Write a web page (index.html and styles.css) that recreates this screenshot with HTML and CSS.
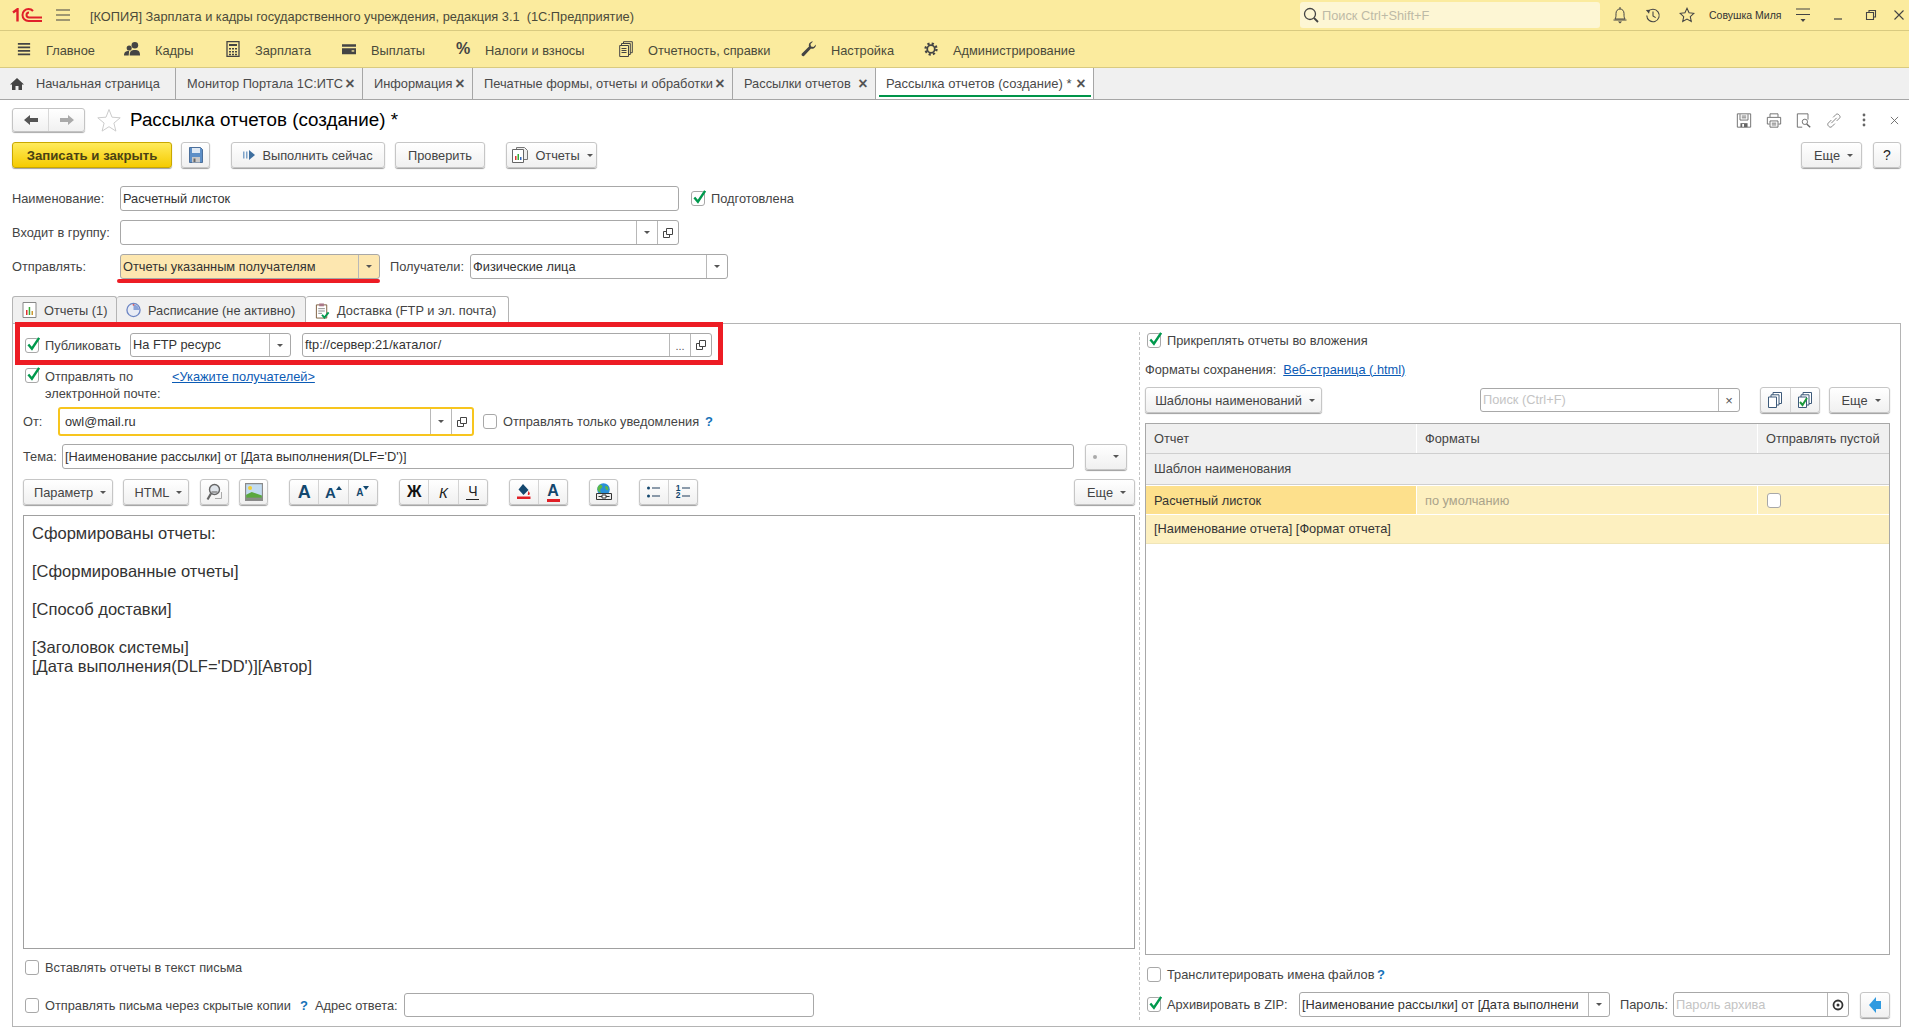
FILE: index.html
```html
<!DOCTYPE html>
<html lang="ru">
<head>
<meta charset="utf-8">
<title>Рассылка отчетов (создание)</title>
<link rel="stylesheet" href="styles.css">
</head>
<body>
<svg class="defs" aria-hidden="true">
  <symbol id="check" viewBox="0 0 16 16"><path d="M2.5 8.5 6.3 13 14 1.5" fill="none" stroke="#00994d" stroke-width="2.6"/></symbol>
  <symbol id="open" viewBox="0 0 12 12"><path d="M4.5 1.5h6v6h-6zM4.5 4.5h-3v6h6v-3" fill="none" stroke="#444" stroke-width="1"/></symbol>
</svg>

<header class="titlebar">
  <svg class="logo" viewBox="0 0 30 14"><path d="M1 4.500 5.500 1.200v12.300" fill="none" stroke="#e0202a" stroke-width="2.400"/><path d="M21 3C20 1.800 18.500 1 16.500 1a6 6 0 0 0 0 12H30M17 4.500a2.500 2.500 0 0 0 0 5h13" fill="none" stroke="#e0202a" stroke-width="2"/></svg>
  <svg class="burger" viewBox="0 0 14 12"><path d="M0 1h14M0 6h14M0 11h14" stroke="#444" stroke-width="1.200"/></svg>
  <span class="apptitle">[КОПИЯ] Зарплата и кадры государственного учреждения, редакция 3.1&nbsp; (1С:Предприятие)</span>
  <div class="search">
    <svg class="search-ic" viewBox="0 0 16 16"><circle cx="7" cy="7" r="5.500" fill="none" stroke="#444" stroke-width="1.300"/><path d="m11 11 4 4" stroke="#444" stroke-width="1.800"/></svg>
    <span class="search-ph">Поиск Ctrl+Shift+F</span>
  </div>
  <svg class="top-ic top-bell" viewBox="0 0 16 18"><path d="M3 13c1-1.500 1-3 1-5.500C4 5 5.500 3 8 3s4 2 4 4.500c0 2.500 0 4 1 5.500zM8 1v2M1.500 14h13" fill="none" stroke="#444"/><path d="M6 15.500h4L8 17.500z" fill="#444"/></svg>
  <svg class="top-ic top-hist" viewBox="0 0 18 18"><path d="M3.300 5.500A7 7 0 1 1 2 9.500" fill="none" stroke="#444" stroke-width="1.200"/><path d="M1 3.500 5.500 3 4.500 7.500z" fill="#444"/><path d="M9 5v5l3 2" fill="none" stroke="#444" stroke-width="1.200"/></svg>
  <svg class="top-ic top-star" viewBox="0 0 18 18"><path d="m9 1.500 2.300 5 5.400.6-4 3.700 1.100 5.400L9 13.500l-4.800 2.700 1.100-5.400-4-3.700 5.400-.6z" fill="none" stroke="#444" stroke-width="1.200"/></svg>
  <span class="username">Совушка Миля</span>
  <svg class="top-ic top-lines" viewBox="0 0 16 16"><path d="M1 2h14M1 7.500h14" stroke="#444" stroke-width="1.200"/><path d="M5.500 12h5L8 15z" fill="#444"/></svg>
  <svg class="win-ic win-min" viewBox="0 0 12 12"><path d="M2 10h8" stroke="#444" stroke-width="1.200"/></svg>
  <svg class="win-ic win-res" viewBox="0 0 12 12"><path d="M4 3V1.500h6.500V8H8.500M1.500 3.500h7v7h-7z" fill="none" stroke="#444" stroke-width="1.100"/></svg>
  <svg class="win-ic win-close" viewBox="0 0 12 12"><path d="m1.500 1.500 9 9M10.500 1.500l-9 9" stroke="#444" stroke-width="1.100"/></svg>
</header>

<nav class="menubar">
  <a class="menu-item mi-main"><svg class="menu-ic" viewBox="0 0 16 16"><path d="M1 2h14M1 6h14M1 10h14M1 14h14" stroke="#444" stroke-width="2"/></svg><span>Главное</span></a>
  <a class="menu-item mi-staff"><svg class="menu-ic ic-wide" viewBox="0 0 18 16"><circle cx="11.500" cy="4" r="3.500" fill="#444"/><path d="M6 15c0-5 2-6 5.500-6s5.500 1 5.500 6z" fill="#444"/><circle cx="5.500" cy="7" r="2.700" fill="#444"/><path d="M0 15c0-4 2-5 5-5 1 0 0 2 0 5z" fill="#444"/></svg><span>Кадры</span></a>
  <a class="menu-item mi-pay"><svg class="menu-ic" viewBox="0 0 14 16"><path d="M1 .5h12v15H1z" fill="none" stroke="#444" stroke-width="1.300"/><path d="M3 3h8v2H3z" fill="#444"/><path d="M3 7h2v1.500H3zM6 7h2v1.500H6zM9 7h2v1.500H9zM3 10h2v1.500H3zM6 10h2v1.500H6zM9 10h2v1.500H9zM3 12.800h2v1.500H3zM6 12.800h2v1.500H6zM9 12.800h2v1.500H9z" fill="#444"/></svg><span>Зарплата</span></a>
  <a class="menu-item mi-out"><svg class="menu-ic" viewBox="0 0 16 14"><path d="M0 1.500h16v3H0zM0 6h16v7H0z" fill="#444"/><path d="M11 8.500h3V10h-3z" fill="#fbeb9e"/></svg><span>Выплаты</span></a>
  <a class="menu-item mi-tax"><span class="pct">%</span><span>Налоги и взносы</span></a>
  <a class="menu-item mi-rep"><svg class="menu-ic" viewBox="0 0 14 16"><path d="M4.500 2.500V.7h8.800v11h-2M2.500 4.500V2.500h8.800v11H9.500M.7 4.500h8.800v11H.7zM2.500 7.500h5M2.500 9.500h5M2.500 11.500h5" fill="none" stroke="#444"/></svg><span>Отчетность, справки</span></a>
  <a class="menu-item mi-set"><svg class="menu-ic ic-wide" viewBox="0 0 16 16"><path d="M15.500 3.500c0 3-2.500 4.800-5 4L3.500 15c-1 1-3.200-1-2.300-2.300L8.500 5.500c-.8-2.500 1-5 4-5L10 3l.5 2.500L13 6z" fill="#444"/></svg><span>Настройка</span></a>
  <a class="menu-item mi-adm"><svg class="menu-ic" viewBox="0 0 16 16"><circle cx="8" cy="8" r="4.300" fill="none" stroke="#444" stroke-width="2"/><circle cx="8" cy="8" r="6.300" fill="none" stroke="#444" stroke-width="2.600" stroke-dasharray="2.500 2.450"/></svg><span>Администрирование</span></a>
</nav>

<div class="tabsbar">
  <div class="tab tab-home"><svg class="home-ic" viewBox="0 0 14 12"><path d="M7 0 0 6.500h2V12h3.500V8h3v4H12V6.500h2z" fill="#444"/></svg><span>Начальная страница</span></div>
  <div class="tab tab-its"><span>Монитор Портала 1С:ИТС</span><span class="tab-x">×</span></div>
  <div class="tab tab-info"><span>Информация</span><span class="tab-x">×</span></div>
  <div class="tab tab-print"><span>Печатные формы, отчеты и обработки</span><span class="tab-x">×</span></div>
  <div class="tab tab-list"><span>Рассылки отчетов</span><span class="tab-x">×</span></div>
  <div class="tab tab-active"><span>Рассылка отчетов (создание) *</span><span class="tab-x">×</span></div>
</div>

<main class="page">
  <div class="head">
    <div class="nav">
      <span class="nav-cell"><svg class="nav-ic" viewBox="0 0 14 10"><path d="M0 5 6 0v3h8v4H6v3z" fill="#555"/></svg></span>
      <span class="nav-cell"><svg class="nav-ic" viewBox="0 0 14 10"><path d="M14 5 8 0v3H0v4h8v3z" fill="#aaa"/></svg></span>
    </div>
    <svg class="fav" viewBox="0 0 24 24"><path d="m12 1.500 3 7.700 8.200.6-6.300 5.300 2 8-6.900-4.400-6.900 4.400 2-8L.8 9.800 9 9.200z" fill="none" stroke="#ccc"/></svg>
    <h1 class="doc-title">Рассылка отчетов (создание) *</h1>
    <div class="head-tools">
      <svg class="hd-ic" viewBox="0 0 18 18"><path d="M1.500 1.500h15v15h-15z" fill="none" stroke="#666"/><path d="M4.500 2v6.500h9V2M6.500 4h5M6.500 6h5" fill="none" stroke="#666"/><path d="M5 12h8v4.500H5z" fill="#666"/><path d="M7 13h2v3H7z" fill="#fff"/></svg>
      <svg class="hd-ic" viewBox="0 0 18 18"><path d="M4.500 5V1.500h9V5M4 13H1.500V5.500h15V13H14M4.500 9.500h9v7h-9zM6.500 12h5M6.500 14h5" fill="none" stroke="#666"/></svg>
      <svg class="hd-ic" viewBox="0 0 18 18"><path d="M7 16.500H1.500v-15h12V8" fill="none" stroke="#666"/><circle cx="10" cy="10.500" r="3" fill="none" stroke="#666"/><path d="m12 13 4 3.500" stroke="#666" stroke-width="1.600"/></svg>
      <svg class="hd-ic" viewBox="0 0 18 18"><path d="M8 5.500 11.500 2c1.500-1.500 5.500 2 4 4L12 9.500M10 12.500 6.500 16c-2 2-6-2-4-4L6 8.500M6 12l6-6" fill="none" stroke="#777"/></svg>
      <svg class="hd-ic hd-dots" viewBox="0 0 4 14"><circle cx="2" cy="2" r="1.400" fill="#666"/><circle cx="2" cy="7" r="1.400" fill="#666"/><circle cx="2" cy="12" r="1.400" fill="#666"/></svg>
      <svg class="hd-ic hd-x" viewBox="0 0 10 10"><path d="m1 1 8 8M9 1 1 9" stroke="#666"/></svg>
    </div>
  </div>

  <div class="actions">
    <button class="btn btn-primary">Записать и закрыть</button>
    <button class="btn btn-save"><svg class="ic16" viewBox="0 0 14 16"><path d="M.5.500h11l2 2v13H.5z" fill="#5d8fc7" stroke="#4b6f9b"/><path d="M3 1h8v5H3z" fill="#dfe9f4"/><path d="M3 10h8v5.500H3z" fill="#c9c9c9"/><path d="M4.500 11.500h2V15h-2z" fill="#666"/></svg></button>
    <button class="btn btn-run"><svg class="ic-run" viewBox="0 0 12 12"><path d="M0 2.500h1.500v7H0zM3 2.500h1.500v7H3z" fill="#7fa3c9"/><path d="M6 1v10l6-5z" fill="#3f6f9f"/></svg>Выполнить сейчас</button>
    <button class="btn btn-check">Проверить</button>
    <button class="btn btn-reports"><svg class="ic16" viewBox="0 0 16 16"><path d="M4.500.5h8l3 3v9h-11z" fill="#eee" stroke="#777"/><path d="M.5 2.500h11v13H.500z" fill="#fff" stroke="#666"/><path d="M3 9h1.500v4H3z" fill="#d33"/><path d="M5.500 7h1.500v6H5.500z" fill="#3a3"/><path d="M8 10h1.500v3H8z" fill="#36b"/></svg>Отчеты<i class="caret"></i></button>
    <div class="actions-right">
      <button class="btn btn-more">Еще<i class="caret"></i></button>
      <button class="btn btn-help">?</button>
    </div>
  </div>

  <div class="frow frow-first">
    <label class="flabel">Наименование:</label>
    <div class="fld w-name"><span class="fld-text">Расчетный листок</span></div>
    <span class="cb cb-on cb-ready"><svg viewBox="0 0 16 16"><use href="#check"/></svg></span>
    <span class="txt">Подготовлена</span>
  </div>
  <div class="frow">
    <label class="flabel">Входит в группу:</label>
    <div class="fld w-name"><span class="fld-text"></span><span class="fbtn"><i class="caret"></i></span><span class="fbtn"><svg class="open-ic" viewBox="0 0 12 12"><use href="#open"/></svg></span></div>
  </div>
  <div class="frow">
    <label class="flabel">Отправлять:</label>
    <div class="fld fld-warn w-send"><span class="fld-text">Отчеты указанным получателям</span><span class="fbtn"><i class="caret"></i></span><span class="underline"></span></div>
    <label class="txt lbl-recv">Получатели:</label>
    <div class="fld w-recv"><span class="fld-text">Физические лица</span><span class="fbtn"><i class="caret"></i></span></div>
  </div>

  <div class="form-tabs">
    <div class="ftab ftab-1"><svg class="ic16" viewBox="0 0 14 16"><path d="M.5.500h13v15H.5z" fill="#fff" stroke="#888"/><path d="M3.500 8H5v5H3.500z" fill="#d33"/><path d="M6.200 5h1.500v8H6.200z" fill="#3a3"/><path d="M9 9h1.500v4H9z" fill="#c93"/></svg><span>Отчеты (1)</span></div>
    <div class="ftab ftab-2"><svg class="ic16" viewBox="0 0 16 16"><circle cx="8" cy="8" r="7" fill="#e8ecf5" stroke="#6d86c4" stroke-width="1.400"/><path d="M8 8V2a6 6 0 0 1 6 6z" fill="#8aa2d8"/><circle cx="8" cy="2.500" r="1" fill="#d55"/></svg><span>Расписание (не активно)</span></div>
    <div class="ftab ftab-3 ftab-on"><svg class="ic16" viewBox="0 0 14 17"><path d="M.5 2h11v14H.5z" fill="#fff" stroke="#7a5a3a"/><path d="M3.500.5h5v3h-5z" fill="#a78"/><path d="M2.500 6h7M2.500 8.500h7M2.500 11h4" stroke="#888"/><path d="m6.500 12.500 2.500 3 4.500-5.500" fill="none" stroke="#00994d" stroke-width="2"/></svg><span>Доставка (FTP и эл. почта)</span></div>
  </div>

  <section class="panel">
    <span class="redbox"></span>
    <div class="col-left">
      <div class="lrow lrow-pub">
        <span class="cb cb-on cb-ind"><svg viewBox="0 0 16 16"><use href="#check"/></svg></span>
        <span class="txt lbl-pub">Публиковать</span>
        <div class="fld w-ftpsel"><span class="fld-text">На FTP ресурс</span><span class="fbtn"><i class="caret"></i></span></div>
        <div class="fld w-ftp"><span class="fld-text">ftp://сервер:21/каталог/</span><span class="fbtn fbtn-dots">...</span><span class="fbtn"><svg class="open-ic" viewBox="0 0 12 12"><use href="#open"/></svg></span></div>
      </div>
      <div class="lrow lrow-mail">
        <span class="cb cb-on cb-ind"><svg viewBox="0 0 16 16"><use href="#check"/></svg></span>
        <span class="txt lbl-mail">Отправлять по<br>электронной почте:</span>
        <a class="link">&lt;Укажите получателей&gt;</a>
      </div>
      <div class="lrow lrow-from">
        <label class="txt lbl-from">От:</label>
        <div class="fld fld-focus w-from"><span class="fld-text fld-text-from">owl@mail.ru</span><span class="fbtn"><i class="caret"></i></span><span class="fbtn"><svg class="open-ic" viewBox="0 0 12 12"><use href="#open"/></svg></span></div>
        <span class="cb cb-notify"></span>
        <span class="txt lbl-notify">Отправлять только уведомления</span>
        <span class="hint">?</span>
      </div>
      <div class="lrow lrow-subj">
        <label class="txt lbl-subj">Тема:</label>
        <div class="fld w-subj"><span class="fld-text">[Наименование рассылки] от [Дата выполнения(DLF='D')]</span></div>
        <button class="btn btn-dot"><i class="dot"></i><i class="caret"></i></button>
      </div>
      <div class="toolbar">
        <button class="btn tb-param">Параметр<i class="caret"></i></button>
        <button class="btn tb-html">HTML<i class="caret"></i></button>
        <button class="btn tb-ic tb-find"><svg class="ic18" viewBox="0 0 18 18"><path d="M9 15.500h6.500V9" fill="none" stroke="#aaa"/><circle cx="8.500" cy="6.500" r="5" fill="#dfe4ea" stroke="#666" stroke-width="1.400"/><path d="M5.500 9h6" stroke="#888" stroke-width="1.500"/><path d="m5 10.500-3.500 6" stroke="#666" stroke-width="2.200"/></svg></button>
        <button class="btn tb-ic tb-img"><svg class="ic18" viewBox="0 0 16 16"><path d="M.5.500h15v15H.5z" fill="#c3dcf0" stroke="#8a8a8a"/><path d="M1 10.500 6 8l9 3v4H1z" fill="#5aa83f"/><path d="M1 13h14v2H1z" fill="#8a8a8a"/><circle cx="4.500" cy="4.500" r="1.800" fill="#f2cf33"/></svg></button>
        <div class="btn-group g-font">
          <span class="gcell gtext g-a1">A</span>
          <span class="gcell gtext g-a2">A<svg class="tri" viewBox="0 0 6 4"><path d="M3 0 6 4H0z" fill="#13476e"/></svg></span>
          <span class="gcell gtext g-a3">A<svg class="tri" viewBox="0 0 6 4"><path d="M3 4 6 0H0z" fill="#13476e"/></svg></span>
        </div>
        <div class="btn-group g-style">
          <span class="gcell g-b">Ж</span>
          <span class="gcell g-i">К</span>
          <span class="gcell g-u"><span>Ч</span><i class="bar bar-dark"></i></span>
        </div>
        <div class="btn-group g-color">
          <span class="gcell"><svg class="ic18" viewBox="0 0 16 18"><path d="M7 1 2.500 6.500 7.500 12 12.500 7z" fill="#13476e"/><path d="M12.500 8c1 1.500 1.800 2.500 1 3.500s-2 .5-1.700-.8z" fill="#d22"/><path d="M1 13.500h13.500v2.500H1z" fill="#e01f26"/></svg></span>
          <span class="gcell g-acol"><span>A</span><i class="bar bar-red"></i></span>
        </div>
        <button class="btn tb-ic tb-web"><svg class="ic18" viewBox="0 0 18 18"><circle cx="8.500" cy="6.500" r="6.300" fill="#2a8fd8"/><path d="M5 1.500c3 .5 3 3 1 4-1.500 1-1 3 .5 5l-3-2C1.500 6 2.500 3 5 1.500zM10.500 3c3 0 3.500 2.500 2 4.500-1.500-1-3-2-2-4.500z" fill="#5bb947"/><path d="M1.500 10.500h15v6h-15z" fill="#eee" stroke="#333"/><path d="M3.500 13.500h11" stroke="#333"/><path d="M7 12h4v3H7z" fill="#fff" stroke="#333"/></svg></button>
        <div class="btn-group g-list">
          <span class="gcell"><svg class="ic14" viewBox="0 0 14 12"><path d="M5 2h8M5 10h8" stroke="#1f3d5c" stroke-width="1.200"/><circle cx="1.500" cy="2" r="1.500" fill="#13476e"/><circle cx="1.500" cy="10" r="1.500" fill="#13476e"/></svg></span>
          <span class="gcell"><span class="numlist">1<br>2</span><svg class="num-lines" viewBox="0 0 8 12"><path d="M0 2h8M0 10h8" stroke="#1f3d5c" stroke-width="1.200"/></svg></span>
        </div>
        <button class="btn tb-more">Еще<i class="caret"></i></button>
      </div>
      <div class="editor">
        <p>Сформированы отчеты:</p>
        <p>[Сформированные отчеты]</p>
        <p>[Способ доставки]</p>
        <p>[Заголовок системы]<br>[Дата выполнения(DLF='DD')][Автор]</p>
      </div>
      <div class="lrow lrow-ins">
        <span class="cb cb-ind"></span>
        <span class="txt lbl-pub">Вставлять отчеты в текст письма</span>
      </div>
      <div class="lrow lrow-bcc">
        <span class="cb cb-ind"></span>
        <span class="txt lbl-pub lbl-bcc">Отправлять письма через скрытые копии</span>
        <span class="hint">?</span>
        <label class="txt lbl-reply">Адрес ответа:</label>
        <div class="fld w-reply"><span class="fld-text"></span></div>
      </div>
    </div>

    <div class="col-right">
      <div class="rrow rrow-att">
        <span class="cb cb-on cb-ind"><svg viewBox="0 0 16 16"><use href="#check"/></svg></span>
        <span class="txt lbl-pub">Прикреплять отчеты во вложения</span>
      </div>
      <div class="rrow rrow-fmt">
        <span class="txt">Форматы сохранения:</span>
        <a class="link link-fmt">Веб-страница (.html)</a>
      </div>
      <div class="rrow rrow-tools">
        <button class="btn r-tpl">Шаблоны наименований<i class="caret"></i></button>
        <div class="fld w-find"><span class="fld-text fld-ph">Поиск (Ctrl+F)</span><span class="fbtn fbtn-x">×</span></div>
        <div class="btn-group g-copy">
          <span class="gcell"><svg class="ic16" viewBox="0 0 14 16"><path d="M5 3V.5h8.500v11H11M3 5V2.800h8V13H8.500M.5 5h8v10.500h-8z" fill="#fff" stroke="#3d5a7a"/></svg></span>
          <span class="gcell"><svg class="ic16" viewBox="0 0 14 16"><path d="M5 3V.5h8.500v11H11M3 5V2.800h8V13H8.500M.5 5h8v10.500h-8z" fill="#fff" stroke="#3d5a7a"/><path d="m2 10 2.500 3L9 6" fill="none" stroke="#1d9a3d" stroke-width="2"/></svg></span>
        </div>
        <button class="btn r-more">Еще<i class="caret"></i></button>
      </div>
      <div class="grid">
        <div class="grid-head">
          <span class="gh">Отчет</span><span class="gh">Форматы</span><span class="gh gh-last">Отправлять пустой</span>
        </div>
        <div class="grid-sub">Шаблон наименования</div>
        <div class="grid-row">
          <span class="gc gc-cur">Расчетный листок</span><span class="gc gc-dim">по умолчанию</span><span class="gc gc-cb"><span class="cb"></span></span>
        </div>
        <div class="grid-sub2">[Наименование отчета] [Формат отчета]</div>
      </div>
      <div class="rrow rrow-trans">
        <span class="cb cb-ind"></span>
        <span class="txt lbl-pub lbl-trans">Транслитерировать имена файлов</span>
        <span class="hint">?</span>
      </div>
      <div class="rrow rrow-zip">
        <span class="cb cb-on cb-ind"><svg viewBox="0 0 16 16"><use href="#check"/></svg></span>
        <span class="txt lbl-zip">Архивировать в ZIP:</span>
        <div class="fld w-zip"><span class="fld-text fld-clip">[Наименование рассылки] от [Дата выполнени</span><span class="fbtn"><i class="caret"></i></span></div>
        <label class="txt lbl-pass">Пароль:</label>
        <div class="fld w-pass"><span class="fld-text fld-ph">Пароль архива</span><span class="fbtn"><svg class="eye-ic" viewBox="0 0 12 12"><circle cx="6" cy="6" r="4.500" fill="none" stroke="#333" stroke-width="1.800"/><circle cx="6" cy="6" r="1.500" fill="#333"/></svg></span></div>
        <button class="btn btn-arrow"><svg class="ic16" viewBox="0 0 12 16"><path d="M0 8 7 0v4h5v8H7v4z" fill="#2f9ae0"/></svg></button>
      </div>
    </div>
  </section>
</main>
</body>
</html>
```

FILE: styles.css
```css
* { box-sizing: border-box; }
html, body { margin: 0; height: 100%; }
body {
  width: 1909px;
  height: 1036px;
  overflow: hidden;
  background: #fff;
  font-family: "Liberation Sans", Arial, sans-serif;
  font-size: 12.8px;
  color: #444;
}
.defs { width: 0; height: 0; position: absolute; }
svg { display: block; flex: none; }

/* Title bar */
.titlebar {
  height: 31px;
  display: flex;
  align-items: center;
  background: #fbeb9e;
  border-bottom: 1px solid #d9ca80;
}
.logo { width: 30px; height: 14px; margin-left: 12px; }
.burger { width: 14px; height: 12px; margin-left: 14px; }
.apptitle { margin: 2px 0 0 20px; width: 1210px; white-space: nowrap; color: #4a4a3a; }
.search {
  width: 300px; height: 26px;
  display: flex; align-items: center;
  background: #fdf6d4; border-radius: 3px;
  padding-left: 3px;
}
.search-ic { width: 16px; height: 16px; }
.search-ph { margin: 1px 0 0 3px; color: #bdbaa6; }
.top-ic { width: 16px; height: 18px; }
.top-bell { margin-left: 12px; }
.top-hist { margin-left: 17px; }
.top-star { margin-left: 18px; }
.username { margin-left: 14px; width: 86px; white-space: nowrap; font-size: 10.5px; color: #333; }
.win-ic { width: 12px; height: 12px; }
.win-min { margin-left: 21px; }
.win-res { margin-left: 21px; }
.win-close { margin-left: 16px; }

/* Menu */
.menubar {
  height: 37px;
  display: flex;
  align-items: center;
  background: #fbeb9e;
  border-bottom: 1px solid #d9ca80;
  padding-left: 17px;
}
.menu-item { display: flex; align-items: center; color: #4a4a3a; white-space: nowrap; }
.menu-item > span:last-child { margin-top: 2px; }
.menu-ic { width: 14px; height: 16px; margin-right: 15px; }
.ic-wide { width: 17px; margin-right: 14px; }
.pct { width: 14px; margin-right: 15px; font-size: 16px; font-weight: bold; color: #444; }
.mi-main { width: 107px; }
.mi-staff { width: 102px; }
.mi-pay { width: 116px; }
.mi-out { width: 114px; }
.mi-tax { width: 163px; }
.mi-rep { width: 181px; }
.mi-set { width: 124px; }

/* Open windows */
.tabsbar {
  height: 32px;
  display: flex;
  background: #f0f0f0;
  border-bottom: 1px solid #a6a6a6;
}
.tab {
  display: flex; align-items: center;
  padding: 0 7px 0 11px;
  border-right: 1px solid #a6a6a6;
  white-space: nowrap;
  color: #4a4a4a;
  position: relative;
}
.tab-home { width: 176px; padding: 0 0 0 10px; }
.tab-its { width: 187px; }
.tab-info { width: 110px; }
.tab-print { width: 260px; }
.tab-list { width: 143px; }
.tab-active { width: 218px; padding-left: 10px; background: #fff; font-size: 13px; }
.tab-active::after {
  content: ""; position: absolute;
  left: 3px; right: 2px; bottom: 2px; height: 2px;
  background: #00944a;
}
.home-ic { width: 14px; height: 12px; margin-right: 12px; }
.tab-x { margin-left: auto; width: 10px; text-align: center; font-size: 16px; line-height: 12px; font-weight: bold; color: #555; }

/* Page */
.page { padding: 8px 8px 0 12px; }
.head { height: 24px; display: flex; align-items: center; }
.nav {
  width: 73px; height: 24px; display: flex;
  border: 1px solid #c4c4c4; border-radius: 3px;
  box-shadow: 0 1px 1px #aaa;
  background: linear-gradient(#fff, #f1f1f1);
}
.nav-cell { flex: 1; display: flex; align-items: center; justify-content: center; }
.nav-cell + .nav-cell { border-left: 1px solid #d8d8d8; }
.nav-ic { width: 14px; height: 10px; }
.fav { width: 24px; height: 24px; margin-left: 12px; }
.doc-title { margin: 0 0 0 9px; font-size: 18.8px; font-weight: normal; color: #000; white-space: nowrap; }
.head-tools { margin-left: auto; display: flex; align-items: center; }
.hd-ic { width: 16px; height: 17px; margin-right: 14px; }
.hd-dots { width: 4px; height: 14px; margin: 0 24px 0 6px; }
.hd-x { width: 9px; height: 9px; margin-right: 2px; }

.btn {
  height: 26px; padding: 0;
  display: inline-flex; align-items: center; justify-content: center;
  border: 1px solid #c6c6c6; border-radius: 3px;
  background: linear-gradient(#fff, #f0f0f0);
  box-shadow: 0 1px 1px #9e9e9e;
  font: inherit; color: #444;
  white-space: nowrap;
  flex: none;
}
.caret {
  display: inline-block; width: 0; height: 0;
  border-left: 3px solid transparent; border-right: 3px solid transparent;
  border-top: 3px solid #555;
  margin-left: 7px;
  flex: none;
}
.actions { margin-top: 10px; height: 26px; display: flex; align-items: center; }
.btn-primary {
  width: 160px;
  background: linear-gradient(#ffeb5c, #f5cb00);
  border-color: #c9a800;
  font-weight: bold; font-size: 13.2px; color: #4a4214;
}
.btn-save { width: 29px; margin-left: 9px; }
.btn-run { width: 154px; margin-left: 21px; }
.ic-run { width: 12px; height: 12px; margin-right: 7px; }
.btn-check { width: 90px; margin-left: 10px; }
.btn-reports { width: 91px; margin-left: 21px; padding-left: 2px; }
.btn-reports .ic16 { margin-right: 7px; }
.ic16 { width: 16px; height: 16px; }
.ic18 { width: 18px; height: 18px; }
.ic14 { width: 14px; height: 12px; }
.actions-right { margin-left: auto; display: flex; }
.btn-more { width: 61px; padding-left: 4px; }
.btn-help { width: 28px; margin-left: 11px; font-size: 14px; color: #222; }

/* Form rows */
.frow { margin-top: 9px; height: 25px; display: flex; align-items: center; }
.frow-first { margin-top: 18px; }
.flabel { width: 108px; white-space: nowrap; }
.txt { white-space: nowrap; }
.fld {
  position: relative;
  height: 25px;
  display: flex; align-items: stretch;
  border: 1px solid #a8a8a8; border-radius: 3px;
  background: #fff;
  color: #333;
  flex: none;
}
.fld-text { flex: 1; min-width: 0; padding: 0 2px; line-height: 23px; white-space: nowrap; overflow: hidden; }
.fld-ph { color: #c4c4c4; }
.fbtn { width: 21px; display: flex; align-items: center; justify-content: center; border-left: 1px solid #b8b8b8; flex: none; }
.fbtn .caret { margin: 0; }
.fbtn-dots { align-items: flex-end; padding-bottom: 4px; font-size: 11px; line-height: 11px; color: #555; }
.fbtn-x { font-size: 13px; color: #555; }
.open-ic { width: 12px; height: 12px; }
.w-name { width: 559px; }
.w-send { width: 260px; background: #fde7b0; }
.w-recv { width: 258px; }
.lbl-recv { margin-left: 10px; width: 80px; }
.underline { position: absolute; left: -4px; right: -1px; bottom: -5px; height: 4px; border-radius: 2px; background: #ed1c24; }

.cb {
  width: 14px; height: 15px; flex: none;
  display: inline-block;
  border: 1px solid #a8a8a8; border-radius: 3px;
  background: #fff;
  position: relative;
}
.cb svg { position: absolute; left: 0; top: -3px; width: 15px; height: 16px; }
.cb-ready { margin-left: 12px; }
.cb-ready + .txt { margin-left: 6px; }

/* Form tabs */
.form-tabs { margin-top: 17px; height: 27px; display: flex; }
.ftab {
  height: 27px;
  display: flex; align-items: center;
  border: 1px solid #b4b4b4; border-bottom: 0; border-radius: 3px 3px 0 0;
  background: #f0f0f0;
  padding-left: 9px;
  white-space: nowrap;
  color: #444;
}
.ftab .ic16 { margin-right: 7px; width: 15px; height: 16px; }
.ftab-1 { width: 105px; }
.ftab-2 { width: 189px; border-left: 0; }
.ftab-3 { width: 203px; border-left: 0; }
.ftab-on { background: #fff; height: 28px; position: relative; }

.panel {
  position: relative;
  width: 1889px; height: 704px;
  border: 1px solid #b4b4b4;
  display: grid;
  grid-template-columns: 1126px 1fr;
}
.redbox {
  position: absolute; left: 2px; top: -2px;
  width: 708px; height: 43px;
  border: 5px solid #ed1c24;
  pointer-events: none;
}

/* Left column */
.col-left { padding: 9px 4px 0 10px; }
.lrow { display: flex; align-items: center; }
.cb-ind { margin-left: 2px; }
.lbl-pub { margin-left: 6px; }
.lrow-pub { height: 24px; }
.lrow-pub .lbl-pub { width: 85px; }
.lrow-pub .fld { height: 24px; }
.lrow-pub .fld-text { line-height: 22px; }
.w-ftpsel { width: 161px; }
.w-ftp { width: 410px; margin-left: 11px; }
.lrow-mail { margin-top: 11px; height: 36px; align-items: flex-start; }
.lbl-mail { margin-left: 6px; width: 127px; line-height: 17px; }
.link { color: #0b5bb5; text-decoration: underline; white-space: nowrap; line-height: 17px; }
.lrow-from { margin-top: 3px; height: 29px; }
.lbl-from { width: 35px; }
.fld-focus { height: 29px; border: 2px solid #f7c51e; }
.w-from { width: 416px; }
.fld-text-from { line-height: 25px; padding-left: 5px; }
.cb-notify { margin-left: 9px; margin-right: 6px; }
.lbl-notify { width: 202px; }
.hint { color: #1672b8; font-weight: bold; font-size: 13px; }
.lrow-subj { margin-top: 8px; height: 25px; }
.lbl-subj { width: 39px; }
.w-subj { width: 1012px; }
.btn-dot { width: 42px; margin-left: 11px; height: 26px; }
.dot { width: 4px; height: 4px; border-radius: 50%; background: #aaa; margin-right: 9px; }
.btn-dot .caret { margin-left: 7px; }

.toolbar { margin-top: 10px; height: 26px; display: flex; }
.tb-param { width: 90px; padding-left: 4px; }
.tb-html { width: 66px; margin-left: 10px; padding-left: 5px; }
.tb-ic { width: 29px; }
.tb-find { margin-left: 11px; }
.tb-img { margin-left: 10px; }
.btn-group {
  height: 26px; display: flex; flex: none;
  border: 1px solid #c6c6c6; border-radius: 3px;
  background: linear-gradient(#fff, #f0f0f0);
  box-shadow: 0 1px 1px #9e9e9e;
}
.gcell { flex: 1; display: flex; align-items: center; justify-content: center; }
.gcell + .gcell { border-left: 1px solid #d4d4d4; }
.g-font { width: 89px; margin-left: 21px; }
.g-style { width: 89px; margin-left: 21px; }
.g-color { width: 59px; margin-left: 21px; }
.tb-web { margin-left: 21px; }
.g-list { width: 59px; margin-left: 21px; }
.tb-more { width: 61px; margin-left: auto; padding-left: 4px; }
.gtext { font-weight: bold; color: #13476e; }
.g-a1 { font-size: 18px; }
.g-a2 { font-size: 15px; }
.g-a3 { font-size: 10px; }
.tri { width: 6px; height: 4px; margin: 0 0 9px 0; }
.g-b { font-weight: bold; font-size: 16px; color: #111; }
.g-i { font-style: italic; font-size: 15px; color: #222; }
.g-u, .g-acol { flex-direction: column; }
.g-u { font-size: 14px; line-height: 13px; color: #222; }
.g-acol { font-weight: bold; font-size: 16px; line-height: 15px; color: #13476e; }
.bar { display: block; width: 13px; margin-top: 1px; }
.bar-dark { height: 1px; background: #222; }
.bar-red { height: 3px; background: #e01f26; }
.numlist { font-size: 8.5px; line-height: 7.5px; font-weight: bold; color: #13476e; margin-right: 2px; }
.num-lines { width: 8px; height: 12px; }

.editor {
  margin-top: 10px;
  height: 434px;
  border: 1px solid #a0a0a0;
  padding: 8px 8px;
  font-size: 16.5px;
  line-height: 19px;
  color: #333;
}
.editor p { margin: 0 0 19px; }
.lrow-ins { margin-top: 11px; height: 15px; }
.lrow-bcc { margin-top: 18px; height: 24px; }
.lbl-bcc { width: 255px; }
.lbl-reply { margin-left: 7px; width: 89px; }
.w-reply { width: 410px; height: 24px; }

/* Right column */
.col-right {
  margin-top: 8px; margin-bottom: 6px;
  padding: 1px 10px 0 5px;
  border-left: 1px dashed #c4c4c4;
}
.rrow { display: flex; align-items: center; }
.rrow-att { height: 14px; }
.rrow-fmt { margin-top: 14px; height: 16px; }
.link-fmt { margin-left: 7px; }
.rrow-tools { margin-top: 10px; height: 26px; }
.r-tpl { width: 177px; padding-left: 3px; }
.w-find { width: 260px; height: 24px; margin-left: 158px; }
.w-find .fld-text { line-height: 22px; }
.g-copy { width: 60px; margin-left: 20px; }
.r-more { width: 61px; margin-left: 9px; padding-left: 3px; }

.grid {
  margin-top: 10px;
  height: 532px;
  border: 1px solid #a8a8a8;
}
.grid-head, .grid-row { display: grid; grid-template-columns: 271px 341px 1fr; }
.grid-head { height: 30px; background: #f0f0f0; border-bottom: 1px solid #cfcfcf; }
.gh { display: flex; align-items: center; padding-left: 8px; border-right: 1px solid #fff; white-space: nowrap; }
.gh-last { border-right: 0; }
.grid-sub { height: 31px; line-height: 30px; background: #f0f0f0; padding-left: 8px; border-bottom: 1px solid #cfcfcf; }
.grid-row { height: 29px; background: #fdf0c0; border-bottom: 1px solid #fff; margin-top: 1px; }
.gc { display: flex; align-items: center; padding-left: 8px; border-right: 1px solid #fff; }
.gc-cur { background: #fde08c; color: #333; }
.gc-dim { color: #aaa38a; }
.gc-cb { border-right: 0; padding-left: 9px; }
.grid-sub2 { height: 29px; line-height: 27px; background: #fdf0c0; padding-left: 8px; border-bottom: 1px solid #f0e5b8; color: #333; }

.rrow-trans { margin-top: 12px; height: 14px; }
.lbl-trans { width: 210px; }
.rrow-zip { margin-top: 11px; height: 25px; }
.lbl-zip { margin-left: 6px; width: 132px; }
.w-zip { width: 311px; }
.fld-clip { padding-right: 0; }
.lbl-pass { margin-left: 10px; width: 53px; }
.w-pass { width: 176px; }
.eye-ic { width: 12px; height: 12px; }
.btn-arrow { width: 30px; margin-left: 11px; }
```
